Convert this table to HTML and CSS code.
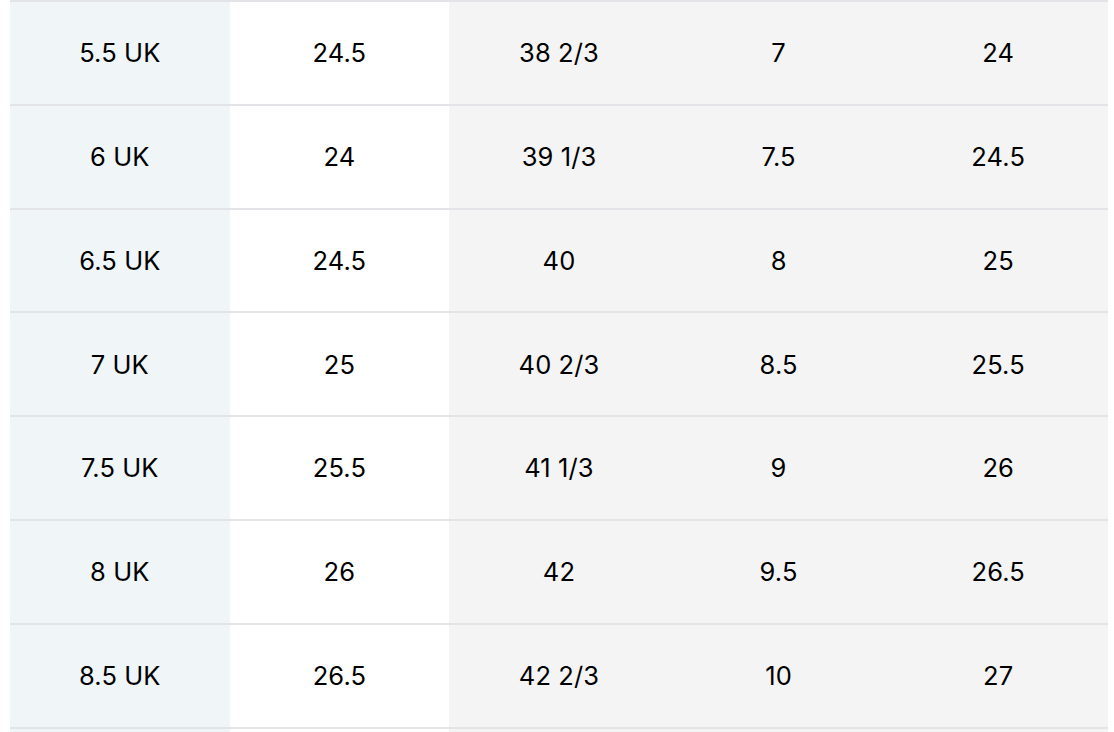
FILE: index.html
```html
<!DOCTYPE html>
<html lang="en">
<head>
<meta charset="utf-8">
<title>Size chart</title>
<link rel="stylesheet" href="styles.css">
</head>
<body>
<table class="size-table">
  <colgroup>
    <col class="col-uk">
    <col class="col-jp">
    <col class="col-eu">
    <col class="col-us">
    <col class="col-cm">
  </colgroup>
  <tbody>
    <tr><td>5.5 UK</td><td>24.5</td><td>38 2/3</td><td>7</td><td>24</td></tr>
    <tr><td>6 UK</td><td>24</td><td>39 1/3</td><td>7.5</td><td>24.5</td></tr>
    <tr><td>6.5 UK</td><td>24.5</td><td>40</td><td>8</td><td>25</td></tr>
    <tr><td>7 UK</td><td>25</td><td>40 2/3</td><td>8.5</td><td>25.5</td></tr>
    <tr><td>7.5 UK</td><td>25.5</td><td>41 1/3</td><td>9</td><td>26</td></tr>
    <tr><td>8 UK</td><td>26</td><td>42</td><td>9.5</td><td>26.5</td></tr>
    <tr><td>8.5 UK</td><td>26.5</td><td>42 2/3</td><td>10</td><td>27</td></tr>
    <tr class="row-partial"><td></td><td></td><td></td><td></td><td></td></tr>
  </tbody>
</table>
</body>
</html>
```
FILE: styles.css
```css
html, body {
  margin: 0;
  padding: 0;
  background: #ffffff;
  overflow: hidden;
}

body {
  font-family: "Inter", "Noto Sans", sans-serif;
  color: #000000;
}

.size-table {
  width: 1098px;
  margin-left: 10px;
  border-collapse: collapse;
  table-layout: fixed;
}

.size-table td {
  height: 101.83px;
  padding: 0;
  border-top: 2px solid #e2e4e8;
  text-align: center;
  vertical-align: middle;
  font-size: 25.5px;
  line-height: 1;
  letter-spacing: 0.1px;
  background: #f4f4f4;
}

.size-table td:first-child {
  background: #f0f5f8;
}

.size-table td:nth-child(2) {
  background: #ffffff;
}
```
